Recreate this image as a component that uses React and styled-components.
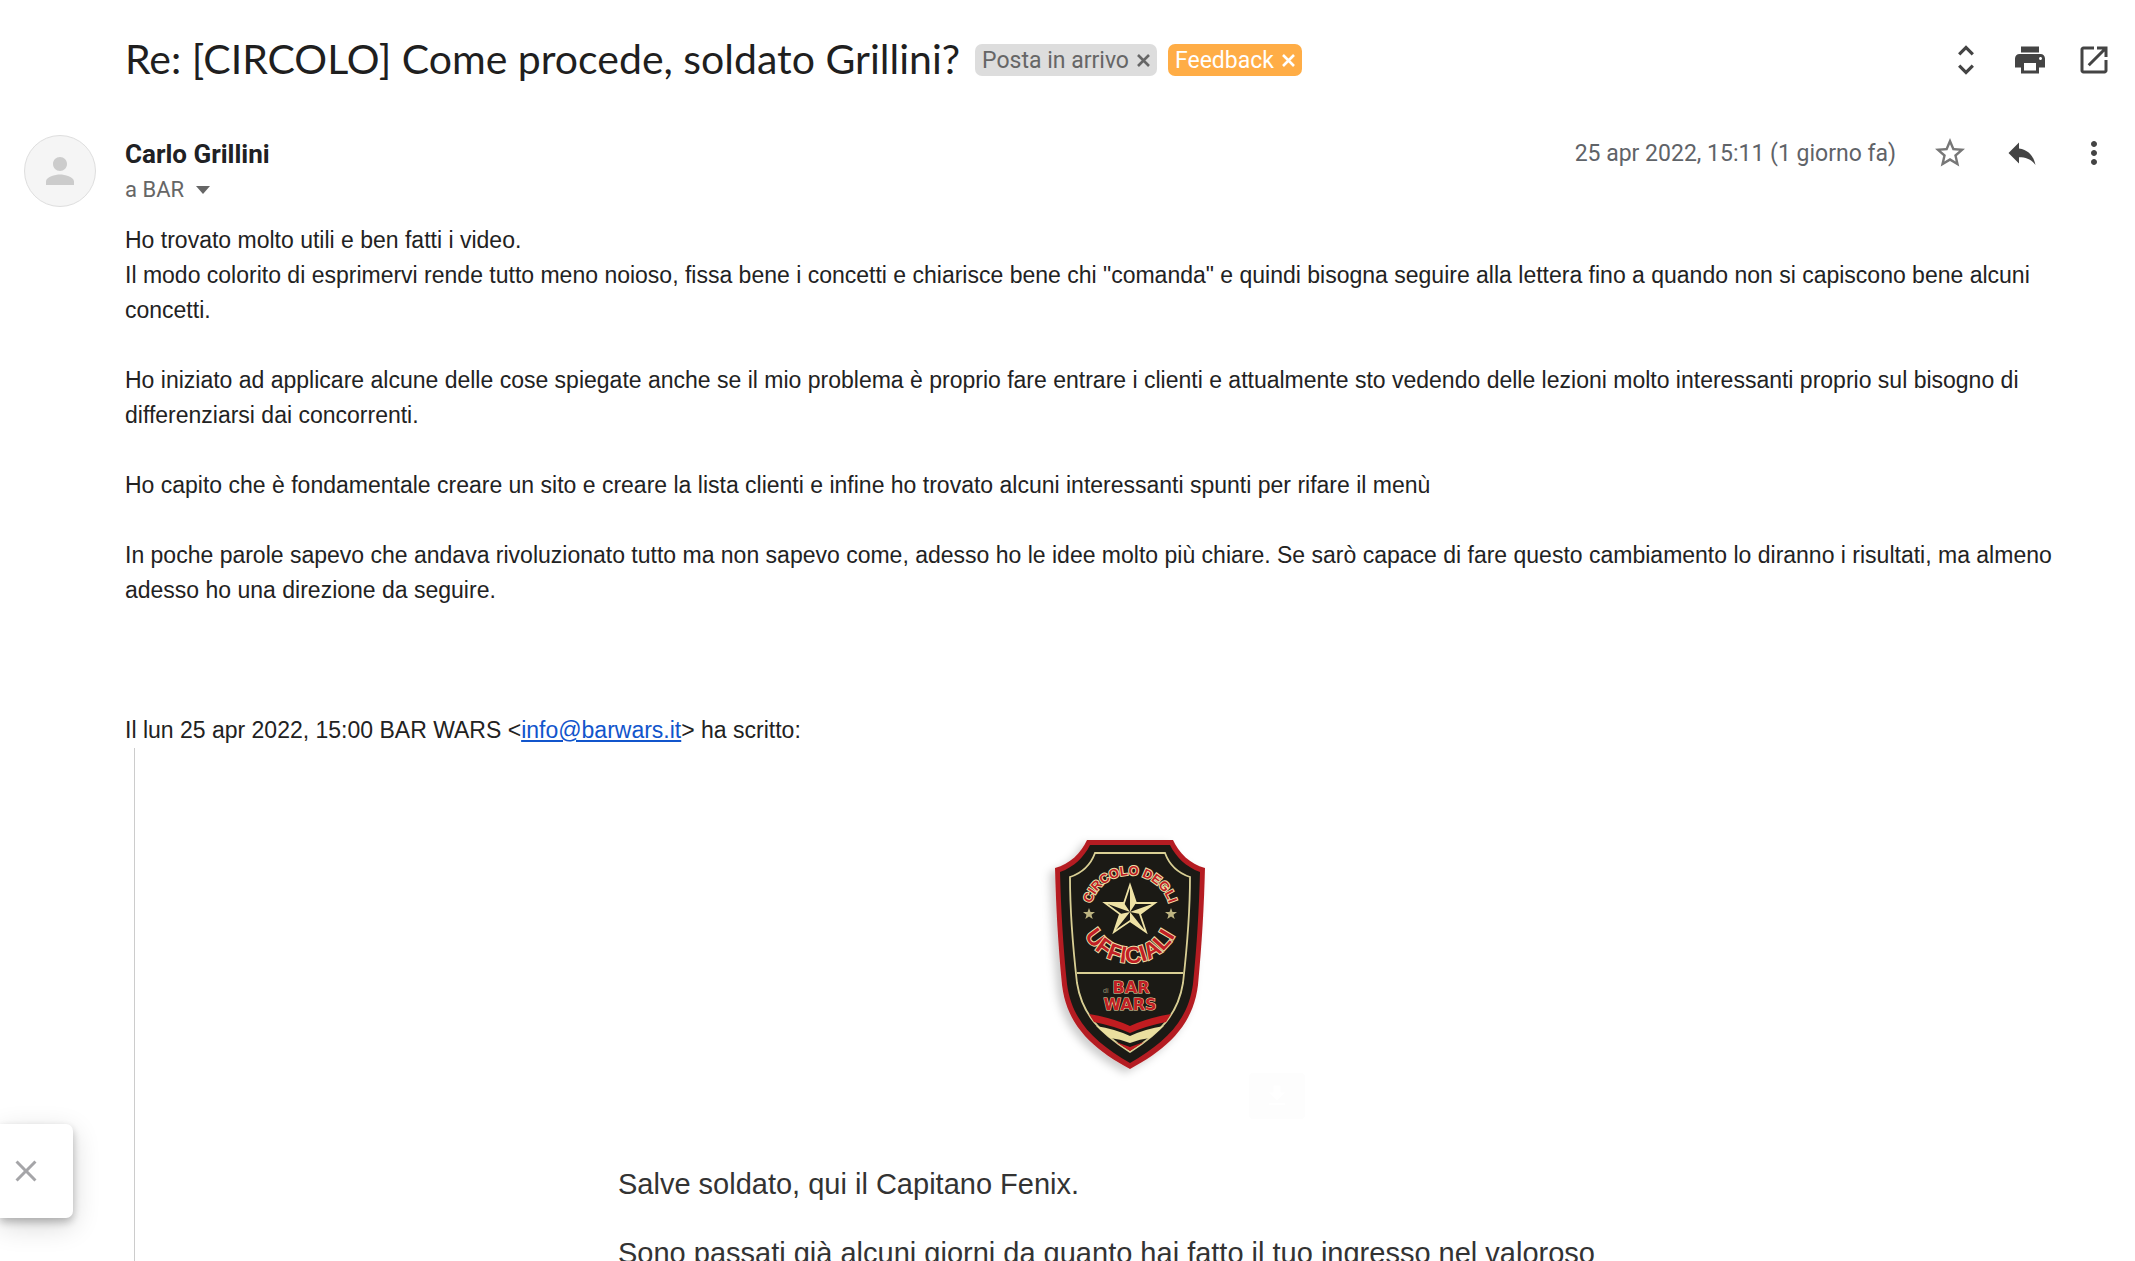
import React from 'react';
import styled, { createGlobalStyle } from 'styled-components';

const GlobalStyle = createGlobalStyle`
  * {
    box-sizing: border-box;
  }

  body {
    margin: 0;
    background: #ffffff;
    color: #222222;
    font-family: 'Liberation Sans', Arial, sans-serif;
  }
`;

const Page = styled.main`
  height: 100vh;
  padding: 30px 22px 0 24px;
  overflow: hidden;
`;

const SubjectBar = styled.header`
  display: flex;
  align-items: center;
  height: 60px;
  padding: 0 1px 0 101px;
`;

const Subject = styled.h1`
  margin: 0 15px 0 0;
  padding-bottom: 2px;
  font-family: Lato, sans-serif;
  font-size: 41px;
  font-weight: 400;
  line-height: 48px;
  color: #1f1f1f;
`;

const Labels = styled.div`
  display: flex;
  gap: 11px;
  margin-right: auto;
`;

const Label = styled.span`
  display: flex;
  align-items: center;
  gap: 8px;
  height: 32px;
  padding: 1px 7px 0;
  border-radius: 7px;
  font-family: Roboto, sans-serif;
  font-size: 23px;
  line-height: 32px;
  color: ${(props) => props.$color};
  background: ${(props) => props.$background};
`;

const PlainButton = styled.button`
  display: flex;
  align-items: center;
  justify-content: center;
  padding: 0;
  border: none;
  background: none;
  color: inherit;
  cursor: pointer;
`;

const Actions = styled.div`
  display: flex;
  align-items: center;
  gap: ${(props) => props.$gap};
  color: #444444;
`;

const MessageHead = styled.section`
  display: flex;
  align-items: flex-start;
  height: 133px;
  padding: 45px 1px 0 0;
`;

const Avatar = styled.div`
  display: flex;
  align-items: center;
  justify-content: center;
  width: 72px;
  height: 72px;
  margin-right: 29px;
  border: 1px solid #dedede;
  border-radius: 50%;
  background: #f5f5f5;
`;

const Sender = styled.div`
  flex: 1;
  font-family: Roboto, sans-serif;
`;

const SenderName = styled.h2`
  margin: 0;
  font-size: 26px;
  font-weight: 700;
  line-height: 38px;
  color: #202124;
`;

const Recipient = styled.div`
  display: flex;
  align-items: center;
  gap: 12px;
  font-size: 22px;
  line-height: 34px;
  color: #666666;
`;

const DateText = styled.time`
  margin-right: 36px;
  font-family: Roboto, sans-serif;
  font-size: 23px;
  line-height: 38px;
  color: #5f6368;
`;

const Body = styled.article`
  margin-left: 101px;
  font-size: 23px;
  line-height: 35px;
`;

const Paragraph = styled.p`
  margin: 0 0 35px;
`;

const Attribution = styled.p`
  margin: 105px 0 0;
`;

const MailLink = styled.a`
  color: #1155cc;
`;

const Quote = styled.blockquote`
  height: 600px;
  margin: 0 0 0 9px;
  padding: 92px 0 0 12px;
  border-left: 1px solid #cccccc;
`;

const Newsletter = styled.div`
  max-width: 1024px;
  margin: 0 auto;
  font-size: 29px;
  line-height: 43px;
  color: #333333;

  p {
    margin: 0 0 26px;
  }
`;

const BadgeBox = styled.div`
  position: relative;
  display: flex;
  justify-content: center;
  height: 323px;
`;

const DownloadButton = styled.button`
  position: absolute;
  top: 233px;
  right: 337px;
  display: flex;
  align-items: center;
  justify-content: center;
  width: 56px;
  height: 46px;
  padding: 0;
  border: none;
  border-radius: 4px;
  background: #fdfdfd;
  color: #ffffff;
`;

const Toast = styled.aside`
  position: fixed;
  bottom: 43px;
  left: 0;
  display: flex;
  align-items: center;
  width: 73px;
  height: 94px;
  padding-left: 8px;
  border-radius: 0 7px 7px 0;
  background: #ffffff;
  color: #a5a5a8;
  box-shadow: 0 4px 8px rgba(0, 0, 0, 0.25), 0 8px 28px rgba(0, 0, 0, 0.16);
`;

const paths = {
  unfold: 'M12 5.2 15.800 9l1.500-1.500L12 2.200 6.700 7.500 8.200 9 12 5.200zM12 18.800 8.200 15l-1.500 1.500L12 21.800l5.300-5.300-1.500-1.500L12 18.800z',
  print: 'M19 8H5c-1.66 0-3 1.34-3 3v6h4v4h12v-4h4v-6c0-1.66-1.34-3-3-3zm-3 11H8v-5h8v5zm3-7c-.55 0-1-.45-1-1s.45-1 1-1 1 .45 1 1-.45 1-1 1zm-1-9H6v4h12V3z',
  open: 'M19 19H5V5h7V3H5c-1.11 0-2 .9-2 2v14c0 1.1.89 2 2 2h14c1.1 0 2-.9 2-2v-7h-2v7zM14 3v2h3.59l-9.83 9.83 1.41 1.41L19 6.41V10h2V3h-7z',
  star: 'M22 9.24l-7.19-.62L12 2 9.19 8.63 2 9.24l5.46 4.73L5.82 21 12 17.27 18.18 21l-1.63-7.03L22 9.24zM12 15.4l-3.76 2.27 1-4.28-3.32-2.88 4.38-.38L12 6.1l1.71 4.04 4.38.38-3.32 2.88 1 4.28L12 15.4z',
  reply: 'M10 9V5l-7 7 7 7v-4.1c5 0 8.5 1.6 11 5.1-1-5-4-10-11-11z',
  more: 'M12 8c1.1 0 2-.9 2-2s-.9-2-2-2-2 .9-2 2 .9 2 2 2zm0 2c-1.1 0-2 .9-2 2s.9 2 2 2 2-.9 2-2-.9-2-2-2zm0 6c-1.1 0-2 .9-2 2s.9 2 2 2 2-.9 2-2-.9-2-2-2z',
  person: 'M12 12c2.21 0 4-1.79 4-4s-1.79-4-4-4-4 1.79-4 4 1.79 4 4 4zm0 2c-2.67 0-8 1.34-8 4v2h16v-2c0-2.66-5.33-4-8-4z',
  close: 'M19 6.41 17.59 5 12 10.59 6.41 5 5 6.41 10.59 12 5 17.59 6.41 19 12 13.41 17.59 19 19 17.59 13.41 12z',
  download: 'M19 9h-4V3H9v6H5l7 7 7-7zM5 18v2h14v-2H5z',
};

const Icon = ({ name, size = 36, color = 'currentColor' }) => (
  <svg width={size} height={size} viewBox="0 0 24 24" fill={color} aria-hidden="true">
    <path d={paths[name]} />
  </svg>
);

const IconButton = ({ name, label, size, color }) => (
  <PlainButton type="button" aria-label={label}>
    <Icon name={name} size={size} color={color} />
  </PlainButton>
);

const Cross = () => (
  <svg width="13" height="13" viewBox="0 0 13 13" fill="none" stroke="currentColor" strokeWidth="2.6" aria-hidden="true">
    <path d="M1 1l11 11M12 1L1 12" />
  </svg>
);

const Badge = () => (
  <svg width="170" height="240" viewBox="0 0 170 240" overflow="visible" role="img" aria-label="Circolo degli Ufficiali">
    <defs>
      <path id="arcTop" d="M44 76 A41 41 0 0 1 126 76" />
      <path id="arcBottom" d="M34 72 A51 51 0 0 0 136 72" />
      <filter id="shadow" x="-20%" y="-20%" width="140%" height="140%">
        <feDropShadow dx="-5" dy="4" stdDeviation="4" floodColor="#000000" floodOpacity="0.2" />
      </filter>
    </defs>
    <path
      d="M42 0H128C134 13 145 24 160 28C159 67 157 103 153 145C148 187 120 210 85 229C50 210 22 187 17 145C13 103 11 67 10 28C25 24 36 13 42 0Z"
      fill="#b51f24"
      filter="url(#shadow)"
    />
    <path
      d="M45 5H125C131 17 141 27 155 32C154 69 152 105 148 144C143 182 119 203 85 223C51 203 27 182 22 144C18 105 16 69 15 32C29 27 39 17 45 5Z"
      fill="#1b1a15"
    />
    <path
      d="M50 13H120C124 24 133 33 145 37C145 73 142 108 138 143C133 174 116 192 85 212C54 192 37 174 32 143C28 108 25 73 25 37C37 33 46 24 50 13Z"
      fill="none"
      stroke="#d9cf94"
      strokeWidth="1.8"
    />
    <path d="M32 133H138" stroke="#d9cf94" strokeWidth="1.8" />
    <path d="M85 45L91 63H110L95 74L101 92L85 81L69 92L75 74L60 63H79Z" fill="#eee2a5" />
    <path d="M85 45V72L79 63ZM110 63L85 72L91 63ZM101 92L85 72L95 74ZM69 92L85 72V81ZM60 63L85 72L75 74Z" fill="#1b1a15" />
    <path d="M85 45L91 63H110L95 74L101 92L85 81L69 92L75 74L60 63H79Z" fill="none" stroke="#eee2a5" strokeWidth="1.8" />
    <path d="M44 68l1.500 4h4.500l-3.500 2.800 1.200 4.200-3.700-2.500-3.700 2.500 1.200-4.200-3.500-2.800h4.500zM126 68l1.500 4h4.500l-3.500 2.800 1.200 4.200-3.700-2.500-3.700 2.500 1.200-4.200-3.500-2.800h4.500z" fill="#bdb481" />
    <g fontFamily="'Liberation Sans', sans-serif" fontWeight="700" fill="#c11f25" stroke="#eedfa8" strokeWidth="2" paintOrder="stroke" textAnchor="middle">
      <text fontSize="13">
        <textPath href="#arcTop" startOffset="50%">CIRCOLO DEGLI</textPath>
      </text>
      <text fontSize="23">
        <textPath href="#arcBottom" startOffset="50%">UFFICIALI</textPath>
      </text>
      <g fontFamily="'DejaVu Sans', sans-serif" fontSize="16" strokeWidth="1">
        <text x="86" y="153">BAR</text>
        <text x="85" y="170">WARS</text>
      </g>
    </g>
    <text x="58" y="153" fontFamily="Liberation Sans, sans-serif" fontSize="7" fill="#9a9573">di</text>
    <path d="M44 174Q68 178 85 186Q102 178 126 174L121 182Q101 186 85 193Q69 186 49 182Z" fill="#c01c20" />
    <path d="M51 186Q70 189 85 196Q100 189 119 186L105 198Q95 199 85 203Q75 199 65 198Z" fill="#eadf9f" />
    <path d="M71 202L85 207L99 202L85 211Z" fill="#c01c20" />
  </svg>
);

const App = () => {
  return (
    <>
      <GlobalStyle />
      <Page>
        <SubjectBar>
          <Subject>Re: [CIRCOLO] Come procede, soldato Grillini?</Subject>
          <Labels>
            <Label $color="#666666" $background="#dddddd">
              Posta in arrivo
              <PlainButton type="button" aria-label="Rimuovi Posta in arrivo"><Cross /></PlainButton>
            </Label>
            <Label $color="#ffffff" $background="#ffad46">
              Feedback
              <PlainButton type="button" aria-label="Rimuovi Feedback"><Cross /></PlainButton>
            </Label>
          </Labels>
          <Actions $gap="28px">
            <IconButton name="unfold" label="Espandi tutto" />
            <IconButton name="print" label="Stampa tutto" />
            <IconButton name="open" label="Apri in una nuova finestra" />
          </Actions>
        </SubjectBar>
        <MessageHead>
          <Avatar><Icon name="person" size={42} color="#cccccc" /></Avatar>
          <Sender>
            <SenderName>Carlo Grillini</SenderName>
            <Recipient>
              a BAR
              <PlainButton type="button" aria-label="Mostra dettagli">
                <svg width="14" height="8" viewBox="0 0 14 8" fill="#666666"><path d="M0 0h14L7 8z" /></svg>
              </PlainButton>
            </Recipient>
          </Sender>
          <DateText>25 apr 2022, 15:11 (1 giorno fa)</DateText>
          <Actions $gap="36px">
            <IconButton name="star" label="Speciale" color="#777777" />
            <IconButton name="reply" label="Rispondi" />
            <IconButton name="more" label="Altro" />
          </Actions>
        </MessageHead>
        <Body>
          <Paragraph>
            Ho trovato molto utili e ben fatti i video.
            <br />
            Il modo colorito di esprimervi rende tutto meno noioso, fissa bene i concetti e chiarisce bene chi "comanda" e quindi bisogna seguire alla lettera fino a quando non si capiscono bene alcuni concetti.
          </Paragraph>
          <Paragraph>
            Ho iniziato ad applicare alcune delle cose spiegate anche se il mio problema è proprio fare entrare i clienti e attualmente sto vedendo delle lezioni molto interessanti proprio sul bisogno di differenziarsi dai concorrenti.
          </Paragraph>
          <Paragraph>
            Ho capito che è fondamentale creare un sito e creare la lista clienti e infine ho trovato alcuni interessanti spunti per rifare il menù
          </Paragraph>
          <Paragraph>
            In poche parole sapevo che andava rivoluzionato tutto ma non sapevo come, adesso ho le idee molto più chiare. Se sarò capace di fare questo cambiamento lo diranno i risultati, ma almeno adesso ho una direzione da seguire.
          </Paragraph>
          <Attribution>
            Il lun 25 apr 2022, 15:00 BAR WARS &lt;<MailLink href="mailto:info@barwars.it">info@barwars.it</MailLink>&gt; ha scritto:
          </Attribution>
          <Quote>
            <Newsletter>
              <BadgeBox>
                <Badge />
                <DownloadButton type="button" aria-label="Scarica">
                  <Icon name="download" size={28} />
                </DownloadButton>
              </BadgeBox>
              <p>Salve soldato, qui il Capitano Fenix.</p>
              <p>Sono passati già alcuni giorni da quanto hai fatto il tuo ingresso nel valoroso</p>
            </Newsletter>
          </Quote>
        </Body>
      </Page>
      <Toast>
        <IconButton name="close" label="Chiudi" />
      </Toast>
    </>
  );
};

export default App;
